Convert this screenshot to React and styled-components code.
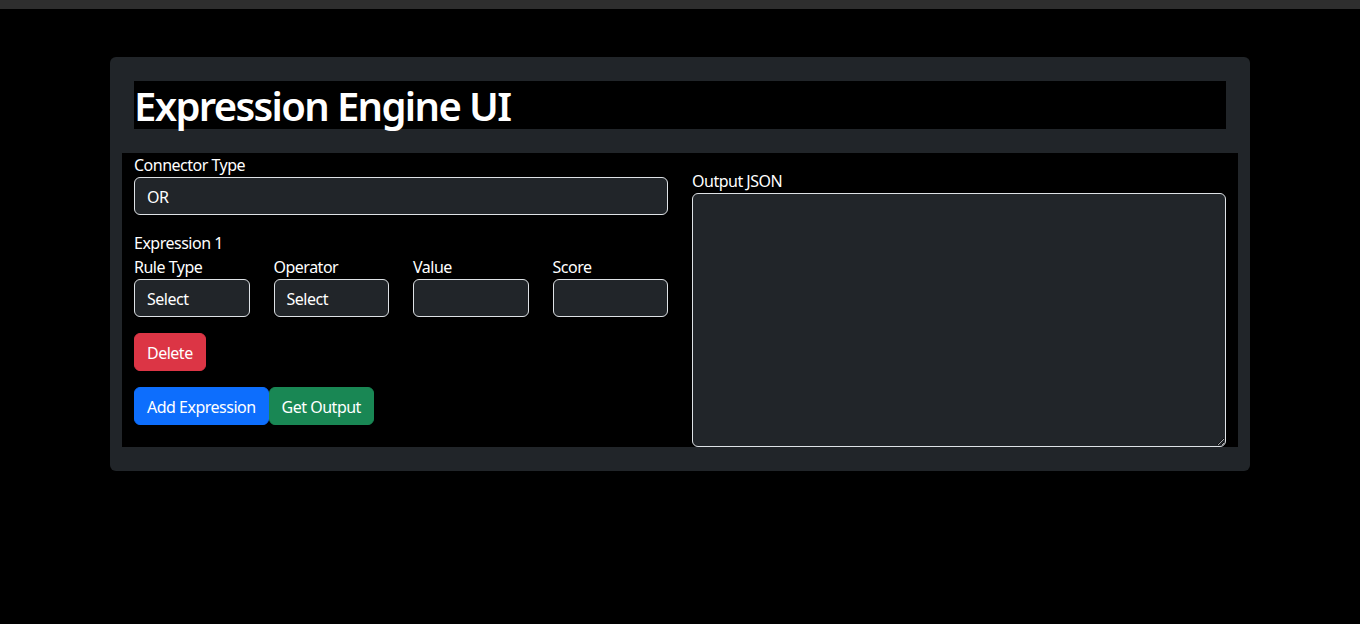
import React from 'react';
import styled, { createGlobalStyle } from 'styled-components';

const GlobalStyle = createGlobalStyle`
    * { box-sizing: border-box; }
    body {
        margin: 0;
        background: #000;
        color: #fff;
        font-family: "Noto Sans", "Open Sans", sans-serif;
        font-size: 16px;
        line-height: 24px;
        letter-spacing: -0.5px;
    }
`;

const TopBar = styled.div`
    height: 9px;
    background: #2e2e2e;
`;

const Card = styled.div`
    width: 1140px;
    margin: 48px auto 0;
    background: #212529;
    border-radius: 6px;
    padding: 24px 12px;
`;

const Title = styled.h1`
    margin: 0 12px 24px;
    background: #000;
    font-size: 40px;
    line-height: 48px;
    font-weight: 600;
    letter-spacing: -1.65px;
    padding-top: 1px;
    height: 48px;
`;

const Body = styled.div`
    display: grid;
    grid-template-columns: 1fr 1fr;
    background: #000;
`;

const Column = styled.div`
    padding: 0 12px;
    display: flex;
    flex-direction: column;
`;

const Label = styled.label`
    display: block;
    color: #fff;
    height: 24px;
`;

const Field = styled.div`
    color: #fff;
    background: #212529;
    border: 1px solid #dee2e6;
    border-radius: 6px;
    height: 38px;
    padding: 7px 12px 5px;
    font-size: 16px;
    line-height: 24px;
`;

const Section = styled.div`
    margin-top: ${p => p.$gap || 0}px;
`;

const FieldGrid = styled.div`
    display: grid;
    grid-template-columns: repeat(4, 1fr);
    column-gap: 24px;
`;

const ButtonRow = styled.div`
    display: flex;
    margin-top: 16px;
`;

const Button = styled.button`
    font-family: inherit;
    font-size: 16px;
    line-height: 24px;
    letter-spacing: -0.5px;
    color: #fff;
    background: ${p => p.$bg};
    border: 1px solid ${p => p.$bg};
    border-radius: 6px;
    height: 38px;
    padding: 7px 12px 5px;
    cursor: pointer;
`;

const OutputBox = styled.textarea`
    display: block;
    width: 100%;
    height: 254px;
    background: #212529;
    color: #fff;
    border: 1px solid #dee2e6;
    border-radius: 6px;
    padding: 6px 12px;
    font-family: inherit;
    font-size: 16px;
    resize: vertical;
`;

const ruleFields = [
    { label: 'Rule Type', value: 'Select' },
    { label: 'Operator', value: 'Select' },
    { label: 'Value', value: '' },
    { label: 'Score', value: '' },
];

const App = () => {
    return (
        <>
            <GlobalStyle />
            <TopBar />
            <Card>
                <Title>Expression Engine UI</Title>
                <Body>
                    <Column>
                        <Label>Connector Type</Label>
                        <Field>OR</Field>

                        {/* Expression block */}
                        <Section $gap={16}>
                            <Label>Expression 1</Label>
                            <FieldGrid>
                                {ruleFields.map(f => (
                                    <div key={f.label}>
                                        <Label>{f.label}</Label>
                                        <Field>{f.value}</Field>
                                    </div>
                                ))}
                            </FieldGrid>
                        </Section>
                        <Section $gap={16}>
                            <Button $bg="#dc3545">Delete</Button>
                        </Section>

                        <ButtonRow>
                            <Button $bg="#0d6efd">Add Expression</Button>
                            <Button $bg="#198754">Get Output</Button>
                        </ButtonRow>
                    </Column>

                    <Column>
                        <Section $gap={16}>
                            <Label>Output JSON</Label>
                            <OutputBox readOnly />
                        </Section>
                    </Column>
                </Body>
            </Card>
        </>
    );
};

export default App;
